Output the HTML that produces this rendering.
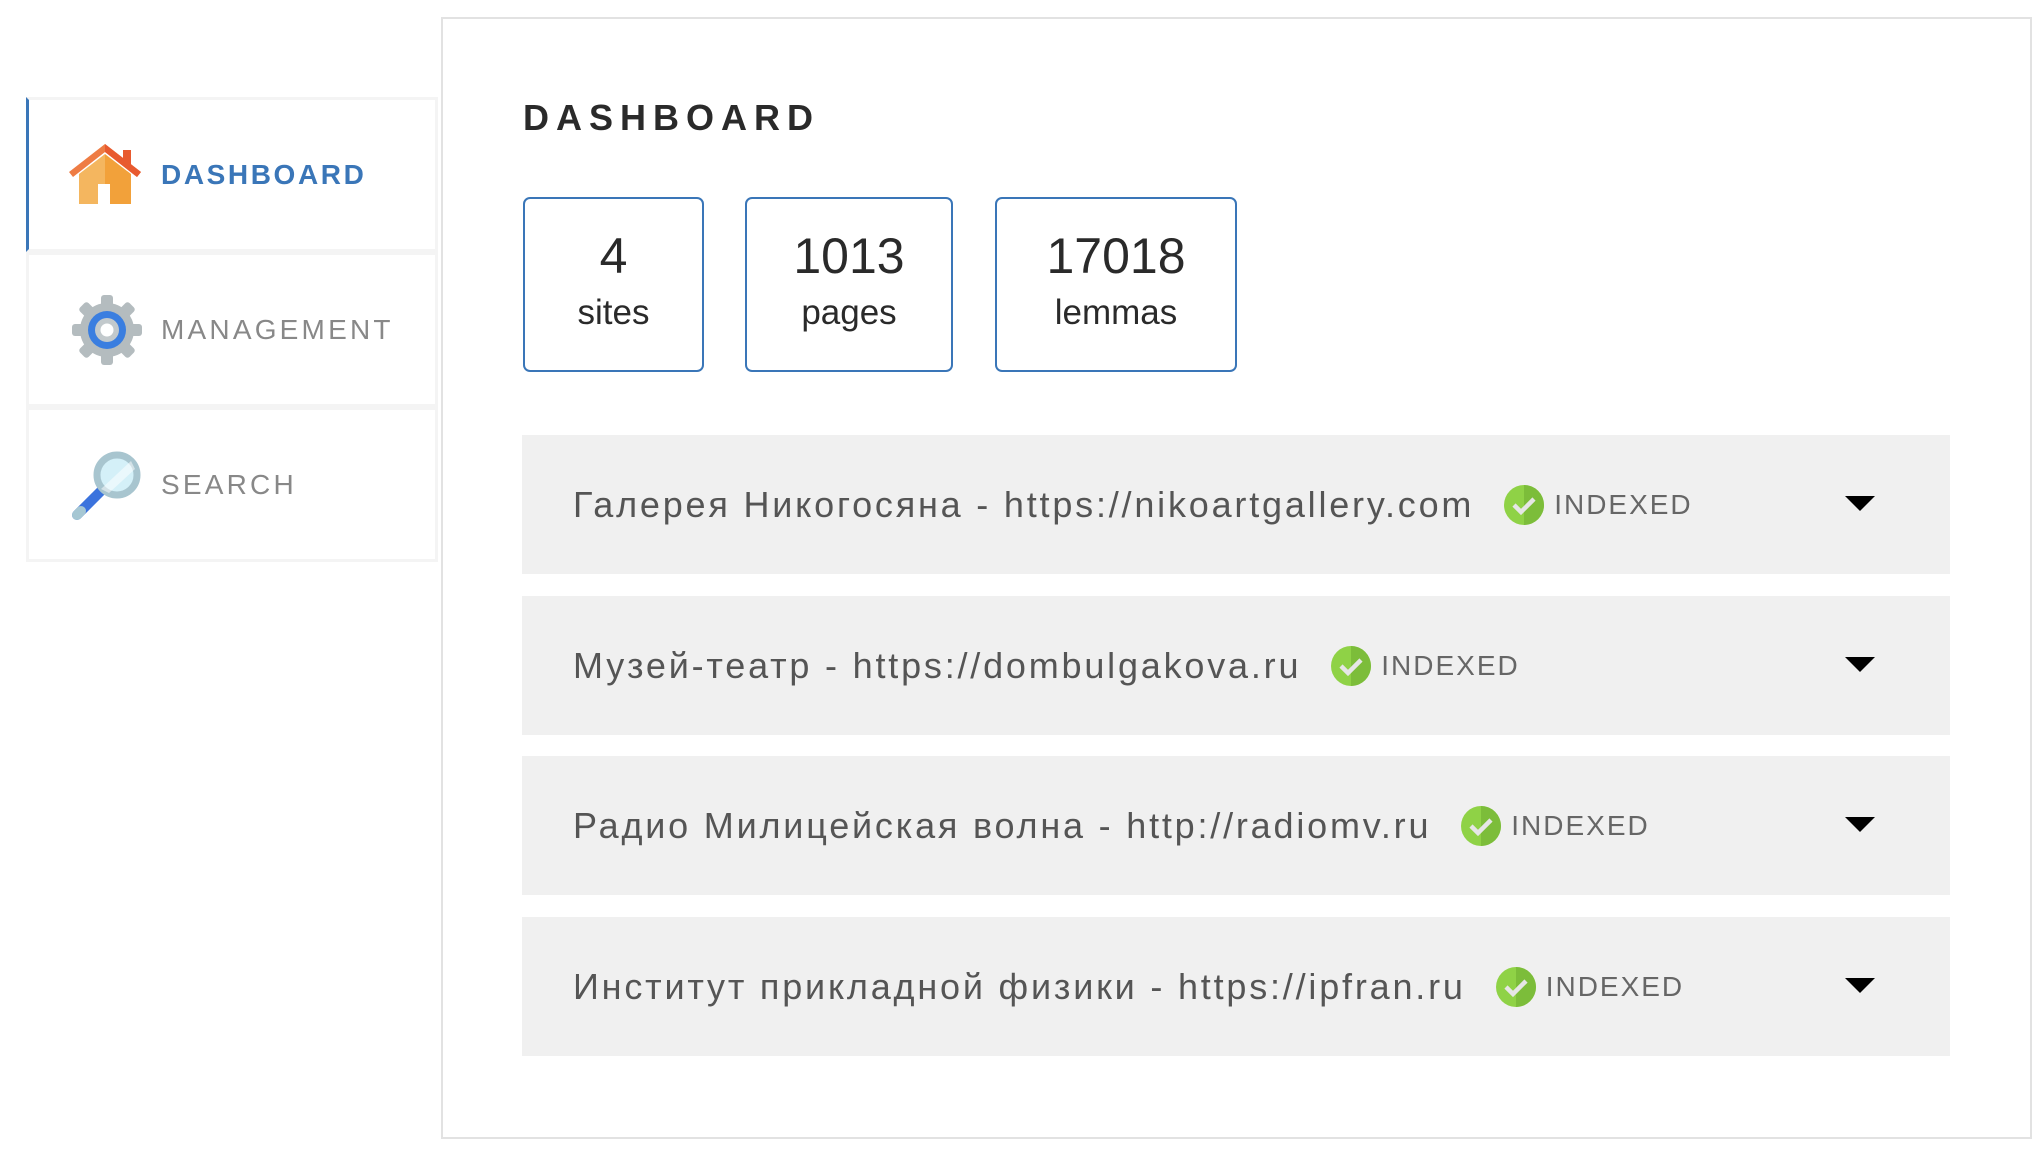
<!DOCTYPE html>
<html><head><meta charset="utf-8"><style>
*{margin:0;padding:0;box-sizing:border-box}
body{width:2042px;height:1166px;background:#fff;font-family:"Liberation Sans",sans-serif;position:relative;overflow:hidden}
.item{position:absolute;left:26px;width:412px;height:155px;border:3px solid #f4f4f4;background:#fff}
.item .lbl{position:absolute;left:132px;top:50%;transform:translateY(-50%);font-size:28px;letter-spacing:3.2px;color:#888}
.item svg{position:absolute;left:42px;top:50%;transform:translateY(-50%)}
.main{position:absolute;left:441px;top:17px;width:1591px;height:1122px;border:2px solid #e2e2e2}
h1{position:absolute;left:523px;top:97px;font-size:36px;font-weight:bold;letter-spacing:7px;color:#2a2a2a}
.box{position:absolute;top:197px;height:175px;border:2px solid #3a76b8;border-radius:7px;text-align:center;color:#2a2a2a}
.box .n{position:absolute;left:0;right:0;top:28px;font-size:50px}
.box .l{position:absolute;left:0;right:0;top:94px;font-size:35px}
.row{position:absolute;left:522px;width:1428px;height:139px;background:#f0f0f0}
.row .t{position:absolute;left:51px;top:50%;transform:translateY(-50%);display:flex;align-items:center;white-space:nowrap}
.row .s{font-size:36px;letter-spacing:2.8px;color:#555}
.row svg.c{margin-left:30px}
.row .ix{margin-left:10px;font-size:28px;letter-spacing:2px;color:#666}
.row .tri{position:absolute;left:1323px;top:61px;width:0;height:0;border-left:15px solid transparent;border-right:15px solid transparent;border-top:15px solid #000}
</style></head><body>
<div class="item" style="top:97px;border-left:3px solid #3a76b8">
<svg width="72" height="62" viewBox="0 0 72 62" style="left:40px"><polygon points="0,28 36,0 72,28 68,33 36,8 4,33" fill="#ee7c44"/><polygon points="36,0 72,28 68,33 36,8" fill="#e85a2f"/><rect x="54" y="6" width="8" height="16" fill="#e85a2f"/><polygon points="10,30 36,10 36,60 10,60" fill="#f4b65f"/><polygon points="36,10 62,30 62,60 36,60" fill="#f2a13a"/><rect x="29" y="40" width="12" height="20" fill="#fff"/></svg>
<div class="lbl" style="color:#3a76b8;font-weight:bold;letter-spacing:2.6px">DASHBOARD</div></div>
<div class="item" style="top:252px">
<svg width="72" height="72" viewBox="0 0 72 72"><g fill="#b4bcbf"><circle cx="36" cy="36" r="27"/><rect x="30" y="1" width="12" height="70" rx="3"/><rect x="1" y="30" width="70" height="12" rx="3"/><rect x="30" y="1" width="12" height="70" rx="3" transform="rotate(45 36 36)"/><rect x="30" y="1" width="12" height="70" rx="3" transform="rotate(-45 36 36)"/></g><circle cx="36" cy="36" r="19" fill="#3a7ee0"/><circle cx="36" cy="36" r="12" fill="#c2c9cc"/><circle cx="36" cy="36" r="6.5" fill="#fff"/></svg>
<div class="lbl">MANAGEMENT</div></div>
<div class="item" style="top:407px">
<svg width="72" height="72" viewBox="0 0 72 72"><line x1="30" y1="42" x2="6" y2="66" stroke="#3b73dd" stroke-width="10" stroke-linecap="round"/><line x1="10" y1="62" x2="6" y2="66" stroke="#a6c7d3" stroke-width="10" stroke-linecap="round"/><circle cx="46" cy="26" r="20" fill="#d4f0f8" stroke="#a8c5cf" stroke-width="7"/><polygon points="30,40 60,12 64,20 38,44" fill="#fff" opacity=".5"/></svg>
<div class="lbl">SEARCH</div></div>
<div class="main"></div>
<h1>DASHBOARD</h1>
<div class="box" style="left:523px;width:181px"><div class="n">4</div><div class="l">sites</div></div>
<div class="box" style="left:745px;width:208px"><div class="n">1013</div><div class="l">pages</div></div>
<div class="box" style="left:995px;width:242px"><div class="n">17018</div><div class="l">lemmas</div></div>

<div class="row" style="top:435px"><div class="t"><span class="s">Галерея Никогосяна - https://nikoartgallery.com</span><svg class="c" width="40" height="40" viewBox="0 0 40 40"><circle cx="20" cy="20" r="20" fill="#8fd246"/><path d="M20 0A20 20 0 0 1 20 40Z" fill="#7cbd3a"/><path d="M10 20l7 7 13-13" stroke="#e6e6e6" stroke-width="4.5" fill="none"/></svg><span class="ix">INDEXED</span></div><div class="tri"></div></div>
<div class="row" style="top:596px"><div class="t"><span class="s">Музей-театр - https://dombulgakova.ru</span><svg class="c" width="40" height="40" viewBox="0 0 40 40"><circle cx="20" cy="20" r="20" fill="#8fd246"/><path d="M20 0A20 20 0 0 1 20 40Z" fill="#7cbd3a"/><path d="M10 20l7 7 13-13" stroke="#e6e6e6" stroke-width="4.5" fill="none"/></svg><span class="ix">INDEXED</span></div><div class="tri"></div></div>
<div class="row" style="top:756px"><div class="t"><span class="s">Радио Милицейская волна - http://radiomv.ru</span><svg class="c" width="40" height="40" viewBox="0 0 40 40"><circle cx="20" cy="20" r="20" fill="#8fd246"/><path d="M20 0A20 20 0 0 1 20 40Z" fill="#7cbd3a"/><path d="M10 20l7 7 13-13" stroke="#e6e6e6" stroke-width="4.5" fill="none"/></svg><span class="ix">INDEXED</span></div><div class="tri"></div></div>
<div class="row" style="top:917px"><div class="t"><span class="s">Институт прикладной физики - https://ipfran.ru</span><svg class="c" width="40" height="40" viewBox="0 0 40 40"><circle cx="20" cy="20" r="20" fill="#8fd246"/><path d="M20 0A20 20 0 0 1 20 40Z" fill="#7cbd3a"/><path d="M10 20l7 7 13-13" stroke="#e6e6e6" stroke-width="4.5" fill="none"/></svg><span class="ix">INDEXED</span></div><div class="tri"></div></div>
</body></html>
